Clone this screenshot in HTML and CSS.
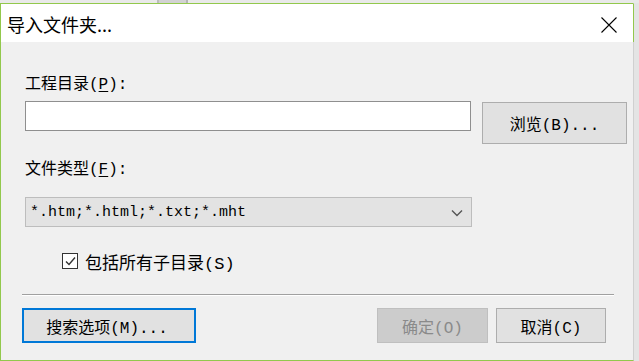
FILE: index.html
```html
<!DOCTYPE html>
<html lang="zh-CN">
<head>
  <meta charset="UTF-8">
  <title>导入文件夹...</title>
  <link rel="stylesheet" href="styles.css">
</head>
<body>
  <div class="topstrip"><span class="tab"></span></div>
  <div class="window">
    <div class="titlebar">
      <span class="title">导入文件夹...</span>
      <svg class="close" width="16" height="16" viewBox="0 0 16 16">
        <path d="M0.5 0.5 L15.5 15.5 M15.5 0.5 L0.5 15.5" stroke="#000" stroke-width="1.1" fill="none"/>
      </svg>
    </div>
    <div class="content">
      <div class="form">
        <div class="label label-first">工程目录(<u>P</u>):</div>
        <div class="path-row">
          <div class="textbox"></div>
          <div class="btn btn-browse">浏览(B)...</div>
        </div>
        <div class="label label-type">文件类型(<u>F</u>):</div>
        <div class="combo">
          <span>*.htm;*.html;*.txt;*.mht</span>
          <svg class="chevron" width="12" height="8" viewBox="0 0 12 8">
            <path d="M1 1.5 L6 6.5 L11 1.5" stroke="#555" stroke-width="1.4" fill="none"/>
          </svg>
        </div>
        <div class="check-row">
          <span class="checkbox">
            <svg width="13" height="13" viewBox="0 0 13 13">
              <path d="M2 6.5 L5 9.5 L11 2.5" stroke="#333" stroke-width="1.4" fill="none"/>
            </svg>
          </span>
          <span class="check-label">包括所有子目录(S)</span>
        </div>
      </div>
      <div class="separator"></div>
      <div class="footer">
        <div class="btn btn-options">搜索选项(M)...</div>
        <div class="footer-right">
          <div class="btn btn-disabled">确定(O)</div>
          <div class="btn btn-cancel">取消(C)</div>
        </div>
      </div>
    </div>
  </div>
</body>
</html>
```

FILE: styles.css
```css
/* Dialog colours */
:root {
  --frame: #92c84c;
  --face: #f0f0f0;
  --btn-bg: #e1e1e1;
  --btn-border: #adadad;
  --ui-font: "Liberation Mono", "Noto Sans CJK SC", monospace;
}

* { box-sizing: border-box; margin: 0; padding: 0; }

body {
  background: #e4e4e4;
  font-family: var(--ui-font);
  font-size: 16px;
  color: #000;
  width: 639px;
  height: 361px;
  overflow: hidden;
}

.topstrip {
  height: 3px;
  background: #e9e9e9;
  display: flex;
}
.topstrip .tab {
  margin-left: 157px;
  width: 31px;
  background: #d2d2d2;
  border-left: 2px solid #bdbdbd;
  border-right: 2px solid #b5b5b5;
}

/* Window frame */
.window {
  width: 634px;
  height: 358px;
  border: 1px solid var(--frame);
  border-right: 1px solid #d0d0d0;
  display: flex;
  flex-direction: column;
}

.titlebar {
  height: 38px;
  background: #fff;
  display: flex;
  align-items: center;
  justify-content: space-between;
  padding: 0 16px 0 6px;
  box-shadow: 1px 0 0 var(--frame);
}
.title {
  font-family: "Noto Sans CJK SC", sans-serif;
  font-size: 18px;
  line-height: 20px;
  margin-top: 1px;
}
.close { margin-top: 4px; }

.content {
  flex: 1;
  background: var(--face);
  padding: 0 21px;
}

.form { padding-left: 3px; }

.label {
  height: 20px;
  line-height: 20px;
}
.label u { text-underline-offset: 2px; }
.label-first { margin-top: 33px; }
.label-type { margin-top: 16px; }

.path-row {
  display: flex;
  align-items: flex-start;
  margin-top: 6px;
}
.textbox {
  flex-shrink: 0;
  width: 446px;
  height: 30px;
  background: #fff;
  border: 1px solid #8f8f8f;
}

.btn {
  flex-shrink: 0;
  display: flex;
  align-items: center;
  justify-content: center;
  background: var(--btn-bg);
  border: 1px solid var(--btn-border);
  height: 35px;
}
.btn-browse {
  margin: 1px 0 0 11px;
  width: 145px;
  height: 42px;
}

.combo {
  margin-top: 17px;
  width: 447px;
  height: 30px;
  background: #e3e3e3;
  border: 1px solid #bdbdbd;
  display: flex;
  align-items: center;
  justify-content: space-between;
  padding: 0 8px 0 4px;
  font-size: 15px;
}
.chevron { margin-top: 1px; }

.check-row {
  margin: 24px 0 0 37px;
  height: 20px;
  display: flex;
  align-items: center;
  gap: 7px;
}
.checkbox {
  width: 16px;
  height: 16px;
  border: 1px solid #333;
  background: #fff;
  display: flex;
  align-items: center;
  justify-content: center;
}
.check-label { font-size: 17px; }

.separator {
  margin-top: 23px;
  width: 592px;
  height: 2px;
  border-top: 1px solid #a0a0a0;
  border-bottom: 1px solid #fff;
}

.footer {
  margin-top: 12px;
  display: flex;
  justify-content: space-between;
  width: 584px;
}
.btn-options {
  width: 174px;
  border: 2px solid #0078d7;
  padding-right: 4px;
}
.footer-right {
  display: flex;
  gap: 8px;
}
.btn-disabled {
  width: 111px;
  background: #cccccc;
  border-color: #bfbfbf;
  color: #8a8a8a;
}
.btn-cancel { width: 110px; }
```
